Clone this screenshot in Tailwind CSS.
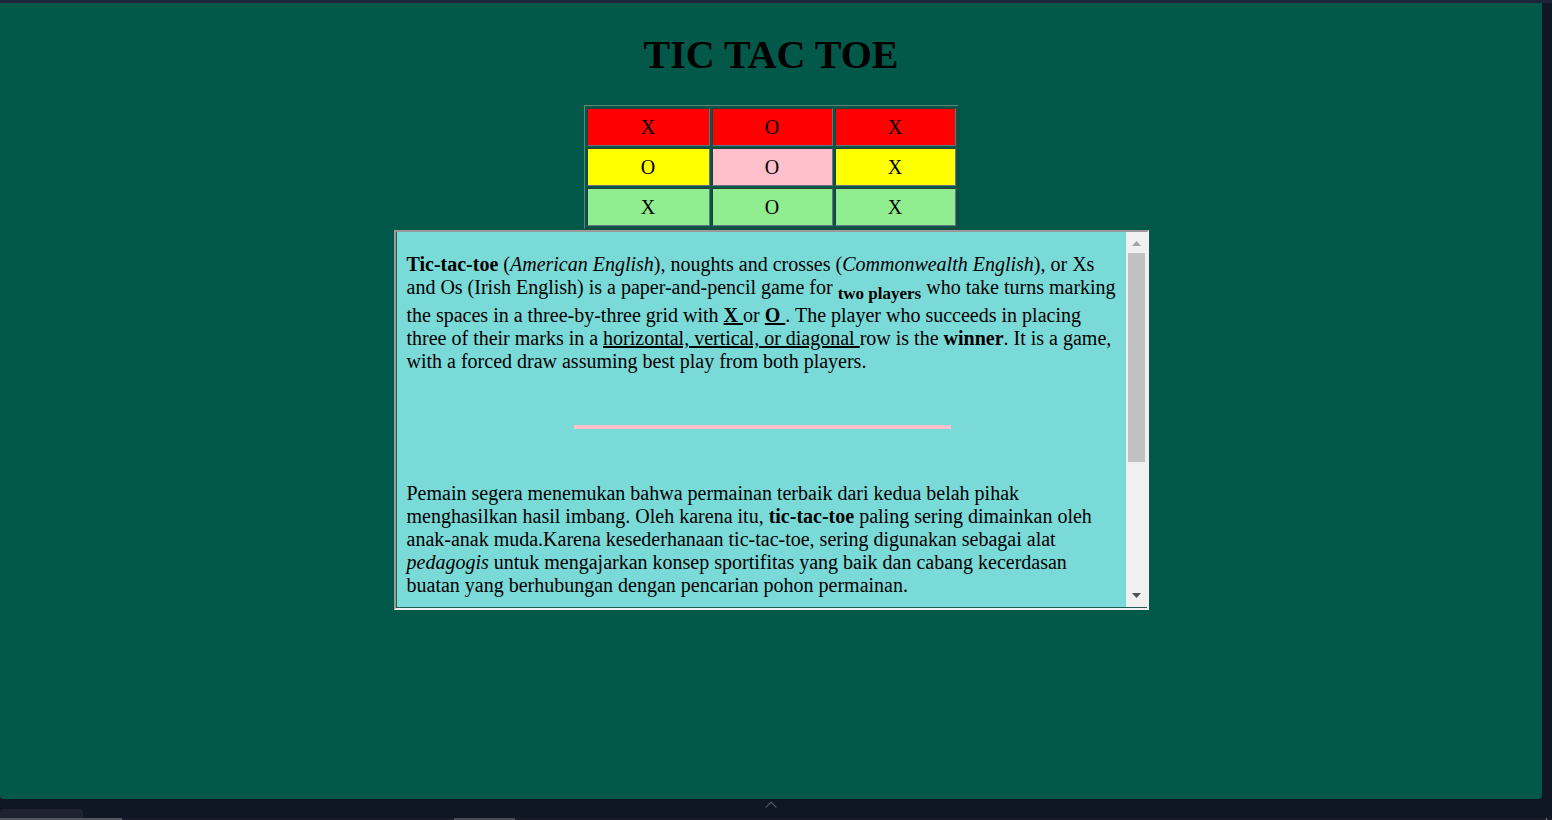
<!DOCTYPE html>
<html lang="id">
<head>
<meta charset="utf-8">
<meta name="viewport" content="width=device-width, initial-scale=1">
<title>Tic Tac Toe</title>
<script src="https://cdn.jsdelivr.net/npm/@tailwindcss/browser@4"></script>
</head>
<body class="flex h-screen flex-col overflow-hidden bg-[#0f1624] font-['Liberation_Serif','Times_New_Roman',serif] text-[20px] leading-[23px] text-black">
  <div class="h-[3px] shrink-0 bg-[#1f2539]"></div>
  <main class="mr-[10px] flex grow flex-col items-center rounded-b-[4px] bg-[#025949]">
    <h1 class="mt-[29px] mb-[27px] text-[40px] leading-[46px] font-bold">TIC TAC TOE</h1>
    <table class="mb-px w-[375px] table-fixed border-separate border-spacing-[2px] border border-t-[#5d837a] border-r-[#213f38] border-b-[#213f38] border-l-[#5d837a] text-center">
      <colgroup>
        <col class="w-[123px]">
        <col class="w-[121px]">
        <col>
      </colgroup>
      <tbody>
        <tr class="h-[38px] bg-[#ff0000]">
          <td class="border border-t-[#2c3a36] border-r-gray-500 border-b-gray-500 border-l-[#2c3a36]">X</td>
          <td class="border border-t-[#2c3a36] border-r-gray-500 border-b-gray-500 border-l-[#2c3a36]">O</td>
          <td class="border border-t-[#2c3a36] border-r-gray-500 border-b-gray-500 border-l-[#2c3a36]">X</td>
        </tr>
        <tr class="h-[38px] bg-[#ffff00]">
          <td class="border border-t-[#2c3a36] border-r-gray-500 border-b-gray-500 border-l-[#2c3a36]">O</td>
          <td class="border border-t-[#2c3a36] border-r-gray-500 border-b-gray-500 border-l-[#2c3a36] bg-[#ffc0cb]">O</td>
          <td class="border border-t-[#2c3a36] border-r-gray-500 border-b-gray-500 border-l-[#2c3a36]">X</td>
        </tr>
        <tr class="h-[38px] bg-[#90ee90]">
          <td class="border border-t-[#2c3a36] border-r-gray-500 border-b-gray-500 border-l-[#2c3a36]">X</td>
          <td class="border border-t-[#2c3a36] border-r-gray-500 border-b-gray-500 border-l-[#2c3a36]">O</td>
          <td class="border border-t-[#2c3a36] border-r-gray-500 border-b-gray-500 border-l-[#2c3a36]">X</td>
        </tr>
      </tbody>
    </table>
    <section class="flex h-[380px] w-[755px] max-w-full border-2 border-t-[#9a9a9a] border-r-[#f0f0f0] border-b-[#f0f0f0] border-l-[#9a9a9a]">
      <div class="min-w-0 grow overflow-hidden border-b border-l border-[#1f5a50] bg-[#7adad8] pt-[21px] pr-2 pl-[10px]">
        <p><b class="font-bold">Tic-tac-toe</b> (<i>American English</i>), noughts and crosses (<i>Commonwealth English</i>), or Xs and Os (Irish English) is a paper-and-pencil game for <sub class="static align-sub text-[17px] leading-[normal] font-bold">two players</sub> who take turns marking the spaces in a three-by-three grid with <u class="font-bold">X </u>or <u class="font-bold">O </u>. The player who succeeds in placing three of their marks in a <u>horizontal, vertical, or diagonal </u>row is the <b class="font-bold">winner</b>. It is a game, with a forced draw assuming best play from both players.</p>
        <hr class="mx-auto mt-[52px] mb-[53px] h-1 w-[377px] border-0 bg-[#ffc0cb]">
        <p>Pemain segera menemukan bahwa permainan terbaik dari kedua belah pihak menghasilkan hasil imbang. Oleh karena itu, <b class="font-bold">tic-tac-toe</b> paling sering dimainkan oleh anak-anak muda.Karena kesederhanaan tic-tac-toe, sering digunakan sebagai alat <i>pedagogis</i> untuk mengajarkan konsep sportifitas yang baik dan cabang kecerdasan buatan yang berhubungan dengan pencarian pohon permainan.</p>
      </div>
      <div class="flex w-[21px] shrink-0 flex-col border-b border-[#1f5a50] bg-[#f0f0f0]">
        <button type="button" aria-label="Scroll up" class="flex h-[21px] shrink-0 items-end justify-center pb-[7px]">
          <svg class="h-[5px] w-[9px]" viewBox="0 0 9 5"><path d="M0 5 4.500 0 9 5Z" fill="#a3a3a3"/></svg>
        </button>
        <div class="grow">
          <div class="mr-[2px] ml-[2px] h-[209px] bg-[#c1c1c1]"></div>
        </div>
        <button type="button" aria-label="Scroll down" class="flex h-[21px] shrink-0 items-start justify-center pt-[7px]">
          <svg class="h-[5px] w-[9px]" viewBox="0 0 9 5"><path d="M0 0H9L4.500 5Z" fill="#505050"/></svg>
        </button>
      </div>
    </section>
  </main>
  <footer class="flex h-[21px] shrink-0 flex-col">
    <div class="mr-[10px] flex h-[10px] items-center justify-center">
      <svg class="h-[7px] w-3" viewBox="0 0 12 7" fill="none" stroke="#525c6e" stroke-width="1.200"><path d="M.7 6.300 6 1l5.300 5.300"/></svg>
    </div>
    <div class="h-[8px] w-[83px] rounded-t-[4px] bg-[#1d2330]"></div>
    <div class="flex h-[3px] flex-col">
      <div class="h-px w-[83px] bg-[#1d2330]"></div>
      <div class="flex h-[2px] bg-[#1c1a26]">
        <div class="w-[122px] bg-[#55565d]"></div>
        <div class="ml-[332px] w-[61px] bg-[#4b4b55]"></div>
        <div class="mr-[5px] ml-auto w-px bg-[#77777f]"></div>
      </div>
    </div>
  </footer>
</body>
</html>
